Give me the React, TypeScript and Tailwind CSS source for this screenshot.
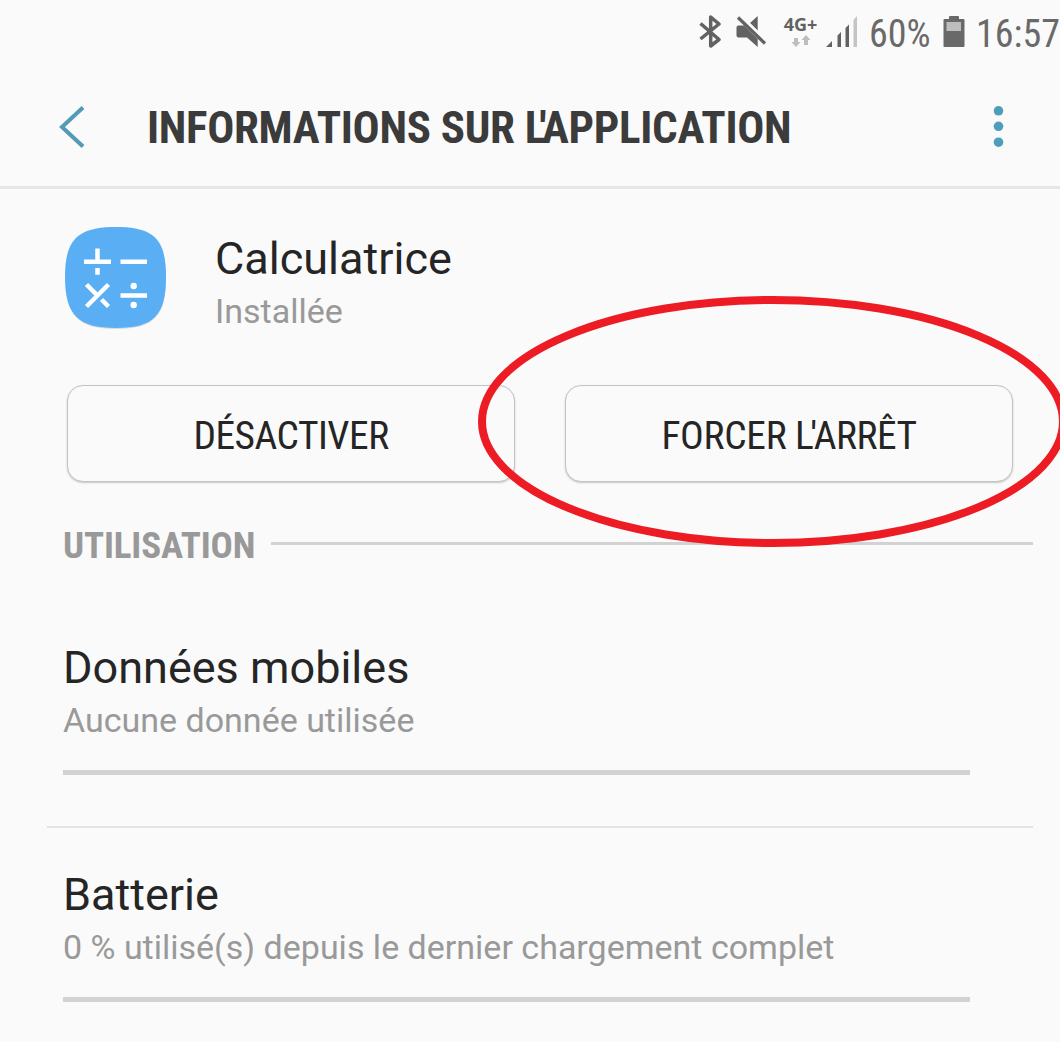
import type { ReactNode } from "react";

const condensed = "font-['Roboto_Condensed','Roboto',sans-serif] [font-stretch:75%]";

function StatusBar() {
  return (
    <div className={`flex h-[67px] items-start text-[38px] leading-[69px] text-[#696969] ${condensed}`}>
      <svg className="ml-[699px] mt-[14px] h-[36px] w-[22px] shrink-0" viewBox="0 0 22 36" fill="none" stroke="#626262" strokeWidth="3.5" strokeLinejoin="round">
        <path d="M1.5 9.5 L20 25.5 L11.7 32 V3 L20 10 L1.5 25" />
      </svg>
      <svg className="ml-[15px] mt-[14px] h-[36px] w-[31px] shrink-0" viewBox="0 0 31 36" fill="#626262">
        <path d="M14 9 L21.700 2 V17 Z" />
        <path d="M2.500 11.500 H8 L21.700 25 V33 L11 23.500 H2.500 Q.5 23.500 .5 21.500 V13.500 Q.5 11.500 2.500 11.500Z" />
        <path d="M4 1.500 L31 27.500" stroke="#fafafa" strokeWidth="3" />
        <path d="M2 3.500 L29 29.500" stroke="#626262" strokeWidth="3.200" />
      </svg>
      <div className="ml-[16px] mt-[15px] flex w-[35px] shrink-0 flex-col items-center">
        <span className="whitespace-nowrap font-['Open_Sans'] text-[18px] font-bold leading-[18px] text-[#626262] [font-stretch:100%]">4G+</span>
        <svg className="mt-[2px] h-[12px] w-[20px]" viewBox="0 0 20 12" fill="#bdbdbd">
          <path d="M3 3 H7 V7 H9.500 L5 12 L.5 7 H3Z M13 10 H17 V5 H19.500 L15 0 L10.500 5 H13Z" />
        </svg>
      </div>
      <svg className="ml-[8px] mt-[16px] h-[31px] w-[32px] shrink-0" viewBox="0 0 32 31" fill="#626262">
        <path d="M0 31 L6 25 V31Z M11.500 19.500 L15 16 V31 H11.500Z M19.500 12 L23 8.500 V31 H19.500Z" />
        <path d="M27.500 4 L31 0 V31 H27.500Z" fill="#c4c4c4" />
      </svg>
      <span className="ml-[11px] w-[62px] whitespace-nowrap">60%</span>
      <svg className="ml-[12px] mt-[15px] h-[33px] w-[22px] shrink-0" viewBox="0 0 22 33">
        <path d="M6 4 V2 Q6 1 7 1 H15 Q16 1 16 2 V4 H20.500 Q21.500 4 21.500 5 V31 Q21.500 32 20.500 32 H1.500 Q.5 32 .5 31 V5 Q.5 4 1.500 4Z" fill="#696969" />
        <rect x="3.500" y="7" width="14.500" height="9" fill="#bdbdbd" />
      </svg>
      <span className="ml-[11px] whitespace-nowrap">16:57</span>
    </div>
  );
}

function Header() {
  return (
    <header className="flex h-[122px] items-center border-b-[3px] border-[#e6e6e6]">
      <svg className="ml-[59px] h-[42px] w-[26px] shrink-0" viewBox="0 0 26 42" fill="none" stroke="#529ab6" strokeWidth="4">
        <path d="M24 1.500 L3 21 L24 40.500" />
      </svg>
      <h1 className={`ml-[62px] mt-[3px] w-[645px] whitespace-nowrap text-[45px] font-bold leading-[60px] tracking-[-0.32px] text-[#3b3b3b] ${condensed}`}>
        INFORMATIONS SUR <span className="tracking-[-7px]">L</span><span className="tracking-[-4.500px]">'</span>APPLICATION
      </h1>
      <svg className="ml-[200px] h-[42px] w-[12px] shrink-0" viewBox="0 0 12 42" fill="#4e9dba">
        <circle cx="6.500" cy="4.800" r="4.800" />
        <circle cx="6.500" cy="20.300" r="4.800" />
        <circle cx="6.500" cy="36.200" r="4.800" />
      </svg>
    </header>
  );
}

function CalculatorIcon() {
  return (
    <svg className="h-[106px] w-[104px] shrink-0" viewBox="0 0 104 106">
      <path d="M52 3 C90 3 102 15 102 53 C102 91 90 104 52 104 C14 104 2 91 2 53 C2 15 14 3 52 3Z" fill="#d5dade" />
      <path d="M52 2 C90 2 102 14 102 52 C102 90 90 103 52 103 C14 103 1 90 1 52 C1 14 14 2 52 2Z" fill="#5aaef4" />
      <g stroke="#fff" strokeWidth="4.500" fill="none">
        <path d="M20 36.700 H47 M33.500 23.500 V36.700 M33.500 43 V49.800 M56.500 36.700 H83 M56.500 70.500 H83 M22.500 81.500 L44.500 59.500 M22.500 59.500 L33.500 70.500 M37.500 74.500 L44.500 81.500" />
      </g>
      <circle cx="69.700" cy="61" r="3.200" fill="#fff" />
      <circle cx="69.700" cy="80" r="3.200" fill="#fff" />
    </svg>
  );
}

function ActionButton({ children }: { children: ReactNode }) {
  return (
    <button className={`h-[97px] w-[448px] rounded-[16px] border border-[#c3c3c3] pt-[5px] text-[39.5px] leading-[48px] tracking-[-0.5px] text-[#252525] shadow-[0_1px_2px_rgba(0,0,0,0.2)] bg-[#fafafa] ${condensed}`}>
      {children}
    </button>
  );
}

function UsageItem({ title, detail }: { title: string; detail: string }) {
  return (
    <section className="ml-[63px] h-[137px] w-[907px] border-b-[5px] border-[#d2d2d2]">
      <h2 className="whitespace-nowrap text-[45px] leading-[60px] text-[#252525]">{title}</h2>
      <p className="mt-[2px] whitespace-nowrap text-[34px] leading-[40px] text-[#999]">{detail}</p>
    </section>
  );
}

export default function App() {
  return (
    <main className="relative h-[1042px] w-[1060px] overflow-hidden bg-[#fafafa] font-['Roboto',sans-serif]">
      <StatusBar />
      <Header />
      <div className="flex h-[196px] pl-[64px] pt-[36px]">
        <CalculatorIcon />
        <div className="ml-[47px] pt-[8px]">
          <h2 className="text-[45px] leading-[52px] text-[#252525]">Calculatrice</h2>
          <p className="mt-[8px] text-[34px] leading-[36px] text-[#999]">Installée</p>
        </div>
      </div>
      <div className="flex gap-[50px] pl-[67px]">
        <ActionButton>DÉSACTIVER</ActionButton>
        <ActionButton>
          <span className="tracking-[-0.300px]">FORCER </span><span className="tracking-[-3.500px]">L'</span>ARRÊT
        </ActionButton>
      </div>
      <div className="mt-[39px] flex h-[48px] items-start pl-[63px]">
        <span className={`w-[208px] whitespace-nowrap text-[37px] font-bold leading-[50px] tracking-[-0.15px] text-[#999] ${condensed}`}>UTILISATION</span>
        <div className="mt-[21px] h-[3px] w-[762px] bg-[#d2d2d2]" />
      </div>
      <div className="mt-[69px]">
        <UsageItem title="Données mobiles" detail="Aucune donnée utilisée" />
        <div className="ml-[47px] mt-[51px] h-[2px] w-[986px] bg-[#e4e4e4]" />
        <div className="mt-[37px]">
          <UsageItem title="Batterie" detail="0 % utilisé(s) depuis le dernier chargement complet" />
        </div>
      </div>
      <svg className="pointer-events-none absolute left-[470px] top-[290px] h-[264px] w-[590px]" viewBox="470 290 590 264">
        <ellipse cx="772.500" cy="421.500" rx="290.500" ry="121.500" fill="none" stroke="#ed1c24" strokeWidth="8" />
      </svg>
    </main>
  );
}
